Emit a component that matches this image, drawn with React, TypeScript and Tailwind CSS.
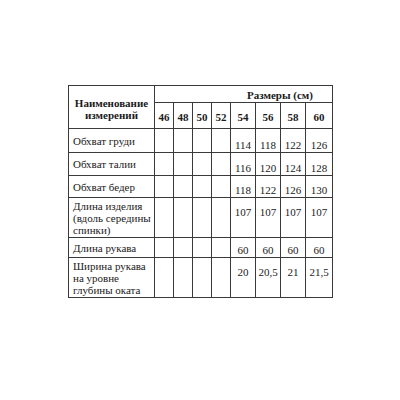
import React from "react";

const sizes = ["46", "48", "50", "52", "54", "56", "58", "60"];
const colW = ["w-[19px]", "w-[19px]", "w-[19px]", "w-[19px]", "w-[25px]", "w-[25px]", "w-[25px]", "w-[27px]"];

type Row = {
  name: string[];
  vals: string[];
  h: string;
  align: "bottom" | "top";
};

const rows: Row[] = [
  { name: ["Обхват груди"], vals: ["114", "118", "122", "126"], h: "h-[24px]", align: "bottom" },
  { name: ["Обхват талии"], vals: ["116", "120", "124", "128"], h: "h-[23px]", align: "bottom" },
  { name: ["Обхват бедер"], vals: ["118", "122", "126", "130"], h: "h-[22px]", align: "bottom" },
  { name: ["Длина изделия", "(вдоль середины", "спинки)"], vals: ["107", "107", "107", "107"], h: "h-[40px]", align: "top" },
  { name: ["Длина рукава"], vals: ["60", "60", "60", "60"], h: "h-[20px]", align: "bottom" },
  { name: ["Ширина рукава", "на уровне", "глубины оката"], vals: ["20", "20,5", "21", "21,5"], h: "h-[40px]", align: "top" },
];

const bc = "border-[1.5px] border-[#3a3a3a]";

export default function App() {
  return (
    <div className="w-[400px] h-[400px] bg-white text-[#1a1a1a] pt-[85px] pl-[68px] font-['Liberation_Serif','Times_New_Roman',serif]">
      <table className="border-collapse text-[11px] leading-[12px] table-fixed font-['Liberation_Serif','Times_New_Roman',serif]">
        <tbody>
          <tr className="h-[17px]">
            <td rowSpan={2} className={`${bc} w-[86px] align-middle text-center font-bold px-[2px] pt-[3px]`}>
              Наименование
              <br />
              измерений
            </td>
            <td colSpan={8} className={`${bc} align-bottom text-left pl-[92px] pb-[1px] font-bold whitespace-nowrap`}>
              Размеры (см)
            </td>
          </tr>
          <tr className="h-[26px]">
            {sizes.map((s, i) => (
              <td key={s} className={`${bc} ${colW[i]} text-center font-bold align-middle pt-[2px]`}>
                {s}
              </td>
            ))}
          </tr>
          {rows.map((r, ri) => (
            <tr key={ri} className={r.h}>
              <td className={`${bc} text-left pl-[4px] align-middle`}>
                {r.name.map((l, li) => (
                  <div key={li}>{l}</div>
                ))}
              </td>
              {[0, 1, 2, 3].map((k) => (
                <td key={k} className={bc}></td>
              ))}
              {r.vals.map((v, vi) => (
                <td
                  key={vi}
                  className={`${bc} text-center whitespace-nowrap ${
                    r.align === "bottom" ? "align-bottom pb-[1px]" : "align-top pt-[8px]"
                  }`}
                >
                  {v}
                </td>
              ))}
            </tr>
          ))}
        </tbody>
      </table>
    </div>
  );
}
